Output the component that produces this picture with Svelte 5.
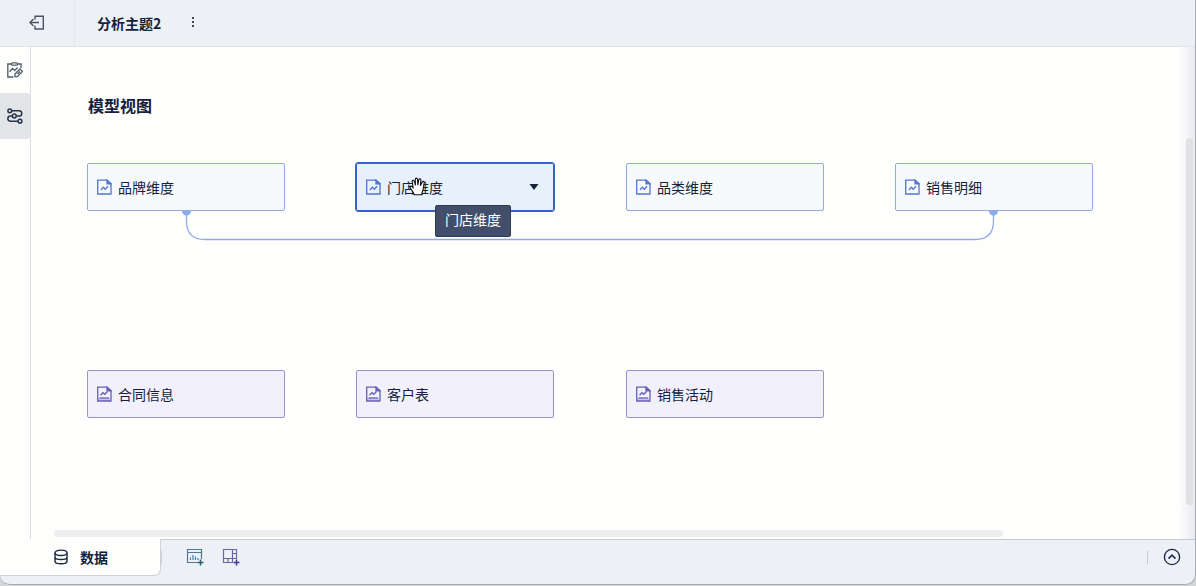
<script lang="ts">
  type Node = { id: string; name: string; kind: 'topic' | 'table'; x: number; y: number }

  const nodes: Node[] = [
    { id: 'brand', name: '品牌维度', kind: 'topic', x: 56, y: 116 },
    { id: 'store', name: '门店维度', kind: 'topic', x: 325, y: 116 },
    { id: 'category', name: '品类维度', kind: 'topic', x: 595, y: 116 },
    { id: 'sales', name: '销售明细', kind: 'topic', x: 864, y: 116 },
    { id: 'contract', name: '合同信息', kind: 'table', x: 56, y: 323 },
    { id: 'customer', name: '客户表', kind: 'table', x: 325, y: 323 },
    { id: 'campaign', name: '销售活动', kind: 'table', x: 595, y: 323 },
  ]

  let selected = $state('store')
</script>

<div class="window">
  <header class="header">
    <button class="header__back" aria-label="返回">
      <svg width="16" height="16" viewBox="0 0 16 16" fill="none" stroke="#4a5568" stroke-width="1.4">
        <path d="M6 4.5V1.2H14.3V14H6V10.7M10 7.5H1M4.5 4L1 7.5L4.5 11" />
      </svg>
    </button>
    <h1 class="header__title">分析主题2</h1>
    <button class="header__more" aria-label="更多">
      <svg width="4" height="14" viewBox="0 0 4 14" fill="#3c475c">
        <rect x="1" y="1" width="2" height="2" />
        <rect x="1" y="5" width="2" height="2" />
        <rect x="1" y="9" width="2" height="2" />
      </svg>
    </button>
  </header>

  <div class="body">
    <nav class="rail">
      <button class="rail__item" aria-label="编辑">
        <svg width="16" height="16" viewBox="0 0 16 16" fill="none" stroke="#4f5b69" stroke-width="1.3">
          <path d="M4.5 2H0.8V15H6.5M10.5 2H14V6" />
          <rect x="4.5" y="0.8" width="6" height="2.4" rx="1" />
          <path d="M2.5 9.8L5.5 6.4L7.7 8.6L10.5 5.5" />
          <path d="M8 12L13 7L15.4 9.4L10.4 14.6H8ZM10.5 12L13 9.5" />
        </svg>
      </button>
      <button class="rail__item rail__item--active" aria-label="模型">
        <svg width="16" height="16" viewBox="0 0 16 16" fill="none" stroke="#28354c" stroke-width="1.5">
          <circle cx="2.8" cy="2.8" r="1.9" />
          <circle cx="7.3" cy="8" r="1.9" />
          <circle cx="13" cy="13.2" r="1.9" />
          <path d="M4.7 2.8H11.8C15.8 2.8 15.8 8 11.8 8H9.2M5.4 8H3.8C-0.2 8 -0.2 13.2 3.8 13.2H11" />
        </svg>
      </button>
    </nav>

    <main class="canvas">
      <h2 class="canvas__title">模型视图</h2>

      <svg class="canvas__link" width="820" height="32" viewBox="0 0 820 32">
        <path d="M6.5 0V10Q6.5 28.5 25 28.5H795Q813.5 28.5 813.5 10V0" fill="none" stroke="#8faae6" stroke-width="1.3" />
        <path d="M2 0H11A4.5 4.5 0 0 1 2 0ZM809 0H818A4.5 4.5 0 0 1 809 0Z" fill="#89a9f0" />
      </svg>

      {#each nodes as node (node.id)}
        <button
          class="node node--{node.kind}"
          class:node--selected={selected === node.id}
          style="left: {node.x}px; top: {node.y}px"
          onclick={() => (selected = node.id)}
        >
          <svg class="node__icon" width="16" height="16" viewBox="0 0 16 16" fill="none" stroke="currentColor" stroke-width="1.3">
            {#if node.kind === 'table'}
              <path d="M2 12H14V15H2Z" fill="#c9c3ef" stroke="none" />
              <path d="M3.5 12H13" />
            {/if}
            <path d="M1.7 1.2H11L15 4.8V15H1.7Z" />
            <path d="M11 1.2V4.8H15Z" fill="currentColor" />
            {#if node.kind === 'table'}
              <path d="M4.5 9.2L7 6.7L8.8 8.3L11.5 5.5" />
            {:else}
              <path d="M5 11L7.3 8.2L9.3 10.3L12 7.2" />
            {/if}
          </svg>
          <span class="node__name">{node.name}</span>
          {#if selected === node.id}
            <svg class="node__caret" width="10" height="6" viewBox="0 0 10 6"><path d="M0.5 0H9.5L5 6Z" fill="#14233f" /></svg>
          {/if}
        </button>
      {/each}

      <div class="tooltip" role="tooltip">门店维度</div>

      <svg class="cursor" width="17" height="19" viewBox="0 0 17 19" fill="#fff" stroke="#111" stroke-width="1.1" stroke-linejoin="round">
        <path d="M5.2 17.8C4.8 15.5 3.5 14.3 2.4 12.6C1.7 11.4 0.7 10.5 1.1 9.6C1.7 8.7 3 9.3 4.2 10.8L3.2 4.8C2.8 3 4.8 2.6 5.3 4.3L6.4 8L6.3 2.3C6.4 0.7 8.3 0.7 8.5 2.2L8.8 7.8L9.8 2.8C10.1 1.3 12 1.6 11.9 3.1L11.4 8.4L13.3 5C14.1 3.7 15.7 4.5 15.2 6C14.5 8.5 14.6 10.6 14.1 12.5C13.5 14.3 12.8 15.5 12.8 17.8Z" />
      </svg>

      <div class="scroll scroll--x"></div>
      <div class="scroll scroll--y"></div>
    </main>
  </div>

  <footer class="footer">
    <button class="footer__tab">
      <svg width="14" height="16" viewBox="0 0 14 16" fill="none" stroke="#1d2a42" stroke-width="1.4">
        <ellipse cx="7" cy="3.8" rx="6" ry="2.7" />
        <path d="M1 3.8V12.2C1 15.6 13 15.6 13 12.2V3.8M1 8C1 11.4 13 11.4 13 8" />
      </svg>
      数据
    </button>
    <div class="footer__tools">
      <button aria-label="添加组件">
        <svg width="18" height="18" viewBox="0 0 18 18" fill="none" stroke="#527792" stroke-width="1.2">
          <path d="M11.5 14.5H1.5V1.5H15.5V11M1.5 4.5H15.5" />
          <path d="M4.5 12V9.5M7 12V7M9.5 12V8.5M12 12V10" stroke="#3b83ad" />
          <path d="M11.5 14.5H17.5M14.5 11.5V17.5" stroke="#285c70" stroke-width="1.5" />
        </svg>
      </button>
      <button aria-label="添加仪表板">
        <svg width="18" height="18" viewBox="0 0 18 18" fill="none" stroke="#6966a4" stroke-width="1.2">
          <path d="M11 14.5H1.5V1.5H14.5V11M1.5 10.5H14.5M10.5 1.5V14.5M10.5 5.5H14.5M6 10.5V14.5" />
          <path d="M11.5 14.5H17.5M14.5 11.5V17.5" stroke="#4336a0" stroke-width="1.5" />
        </svg>
      </button>
    </div>
    <button class="footer__expand" aria-label="展开">
      <svg width="18" height="18" viewBox="0 0 18 18" fill="none" stroke="#1d2d4c" stroke-width="1.4">
        <circle cx="9" cy="9" r="7.6" />
        <path d="M5.5 10.6L9 7.2L12.5 10.6" stroke-width="1.6" />
      </svg>
    </button>
  </footer>
</div>

<style>
  :global(body) {
    background: #d3d5d8;
  }

  .window {
    display: flex;
    flex-direction: column;
    box-sizing: border-box;
    height: calc(100vh - 1px);
    border: solid #a9adb3;
    border-width: 0 1px 1px 0;
    border-radius: 0 0 10px 10px;
    overflow: hidden;
    background: #edf1f5;
    color: #14213d;
    font-family: 'Noto Sans CJK SC', sans-serif;
    font-size: 14px;
    line-height: 20px;
  }

  button {
    display: flex;
    align-items: center;
    padding: 0;
    border: none;
    background: none;
    color: inherit;
    font: inherit;
    cursor: pointer;
  }

  .header {
    display: flex;
    align-items: center;
    height: 46px;
    flex: none;
    border-bottom: 1px solid #e0e4e9;
  }

  .header__back {
    justify-content: center;
    width: 75px;
    height: 100%;
    border-right: 1px solid #e3e8ee;
  }

  .header__title {
    margin: 0 30px 0 22px;
    font-size: 14px;
    font-weight: 700;
  }

  .body {
    display: flex;
    flex: 1;
    min-height: 0;
    background: #fefefd;
  }

  .rail {
    width: 30px;
    flex: none;
    border-right: 1px solid #dcdee3;
  }

  .rail__item {
    justify-content: center;
    width: 100%;
    height: 46px;
    border-radius: 0 3px 3px 0;
  }

  .rail__item--active {
    background: #e3e4e8;
  }

  .canvas {
    position: relative;
    flex: 1;
    min-width: 0;
    overflow: hidden;
    background: linear-gradient(to left, #e7e9ed, #f7f7fb 10px, #fefefd 16px);
  }

  .canvas__title {
    margin: 46px 0 0 57px;
    font-size: 16px;
    line-height: 24px;
    font-weight: 700;
  }

  .canvas__link {
    position: absolute;
    left: 149px;
    top: 164px;
  }

  .node {
    position: absolute;
    box-sizing: border-box;
    width: 198px;
    height: 48px;
    padding: 0 14px 0 8px;
    border: 1px solid #93aade;
    border-radius: 2px;
    background: #f6fafd;
  }

  .node__icon {
    color: #5574cf;
  }

  .node__name {
    margin-left: 6px;
  }

  .node__caret {
    margin-left: auto;
  }

  .node--table {
    border-color: #9993cb;
    background: #f2f1fb;
  }

  .node--table .node__icon {
    color: #6660b5;
  }

  .node--selected {
    border-color: #3563c9;
    outline: 1px solid #3563c9;
    background: #e6f1fc;
  }

  .tooltip {
    position: absolute;
    left: 404px;
    top: 158px;
    padding: 3px 9px 7px;
    border: 1px solid #2e3b52;
    border-radius: 2px;
    background: #414f6b;
    color: #fff;
  }

  .cursor {
    position: absolute;
    left: 378px;
    top: 130px;
  }

  .scroll {
    position: absolute;
    border-radius: 4px;
    background: #eeeef0;
  }

  .scroll--x {
    left: 23px;
    bottom: 2px;
    width: 81.5%;
    height: 7px;
  }

  .scroll--y {
    right: 2px;
    top: 91px;
    bottom: 34px;
    width: 7px;
    background: #dfe1e2;
  }

  .footer {
    display: flex;
    align-items: flex-start;
    height: 45px;
    flex: none;
  }

  .footer__tab {
    box-sizing: border-box;
    gap: 12px;
    width: 161px;
    height: 37px;
    padding-left: 54px;
    border: solid #cdd2d9;
    border-width: 0 1px 1px 0;
    border-radius: 0 0 7px 0;
    background: #fefefd;
    font-weight: 700;
  }

  .footer__tools {
    display: flex;
    flex: 1;
    gap: 18px;
    align-items: center;
    height: 34px;
    border-top: 1px solid #c8ccd2;
  }

  .footer__tools::before {
    content: '';
    width: 1px;
    height: 13px;
    margin-right: 6px;
    background: #cfd4da;
  }

  .footer__expand {
    height: 35px;
    padding-right: 14px;
    border-top: 1px solid #c8ccd2;
  }

  .footer__expand::before {
    content: '';
    width: 1px;
    height: 13px;
    margin-right: 15px;
    background: #c5cad2;
  }
</style>
